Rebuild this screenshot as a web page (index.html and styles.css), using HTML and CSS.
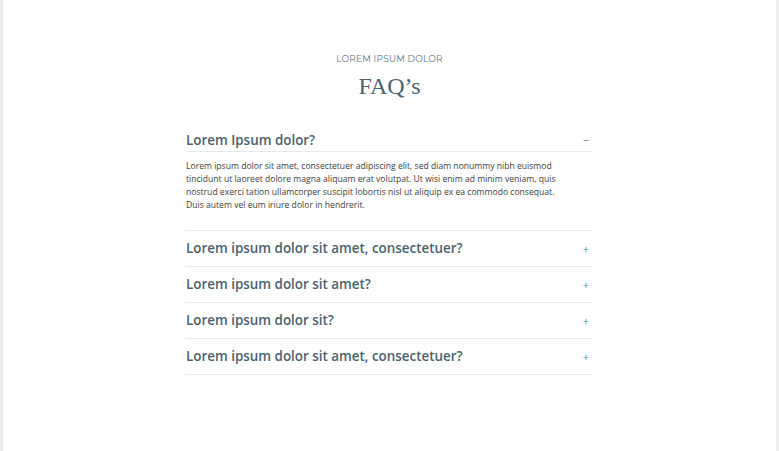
FILE: index.html
```html
<!DOCTYPE html>
<html>
<head>
<meta charset="utf-8">
<link rel="stylesheet" href="styles.css">
</head>
<body>
<div class="page">
  <section class="faq">
    <p class="eyebrow">LOREM IPSUM DOLOR</p>
    <h1 class="title">FAQ’s</h1>
    <div class="list">
      <div class="item open">
        <div class="q"><span>Lorem Ipsum dolor?</span><span class="icon">−</span></div>
        <p class="a">Lorem ipsum dolor sit amet, consectetuer adipiscing elit, sed diam nonummy nibh euismod tincidunt ut laoreet dolore magna aliquam erat volutpat. Ut wisi enim ad minim veniam, quis nostrud exerci tation ullamcorper suscipit lobortis nisl ut aliquip ex ea commodo consequat. Duis autem vel eum iriure dolor in hendrerit.</p>
      </div>
      <div class="item">
        <div class="q"><span>Lorem ipsum dolor sit amet, consectetuer?</span><span class="icon">+</span></div>
      </div>
      <div class="item">
        <div class="q"><span>Lorem ipsum dolor sit amet?</span><span class="icon">+</span></div>
      </div>
      <div class="item">
        <div class="q"><span>Lorem ipsum dolor sit?</span><span class="icon">+</span></div>
      </div>
      <div class="item">
        <div class="q"><span>Lorem ipsum dolor sit amet, consectetuer?</span><span class="icon">+</span></div>
      </div>
    </div>
  </section>
</div>
</body>
</html>
```
FILE: styles.css
```css
html, body { margin: 0; padding: 0; }
body {
  background: #ededed;
  font-family: "Open Sans", "Liberation Sans", sans-serif;
}
.page {
  margin: 0 3px;
  background: #fff;
  height: 451px;
  display: flex;
  justify-content: center;
}
.faq {
  width: 407px;
  padding-top: 53px;
}
.eyebrow {
  margin: 0;
  text-align: center;
  font-family: "Montserrat", "Inter", "Lato", sans-serif;
  font-size: 9px;
  letter-spacing: 0.2px;
  line-height: 12px;
  color: #5e7583;
}
.title {
  margin: 6px 0 0;
  text-align: center;
  font-family: "Liberation Serif", serif;
  font-weight: normal;
  font-size: 24px;
  line-height: 30px;
  color: #4a6575;
}
.list { margin-top: 30px; }
.item { border-bottom: 1px solid #e6e9eb; }
.q {
  display: flex;
  justify-content: space-between;
  align-items: center;
  height: 33px;
  padding-bottom: 2px;
  font-size: 13.4px;
  font-weight: 600;
  line-height: 18px;
  color: #4a6270;
}
.item.open .q { height: 20px; padding-bottom: 0; border-bottom: 1px solid #e6e9eb; align-items: flex-start; }
.icon {
  font-weight: 400;
  font-size: 11px;
  color: #6f8390;
  margin-right: 4px;
}
.item:not(.open) .icon { padding-top: 3px; }
.a {
  margin: 0;
  padding: 8px 30px 18px 0;
  font-size: 8.6px;
  line-height: 13px;
  color: #3e3e3e;
}
```
